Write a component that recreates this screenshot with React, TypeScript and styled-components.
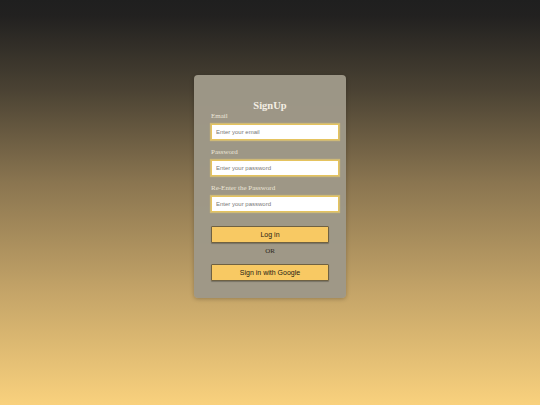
import React from "react";
import styled, { createGlobalStyle } from "styled-components";

const Global = createGlobalStyle`
  html, body { margin: 0; padding: 0; }
  body {
    min-height: 100vh;
    background: linear-gradient(180deg, #1f1f1f 0%, #222120 4%, #4a4233 22%, #8a7550 45%, #c4a468 72%, #f9d17d 100%);
    font-family: "Liberation Serif", serif;
  }
`;

const Page = styled.div`
  min-height: 100vh;
  box-sizing: border-box;
  display: flex;
  justify-content: center;
  align-items: flex-start;
  padding-top: 75px;
`;

const Card = styled.form`
  width: 152px;
  box-sizing: border-box;
  padding: 25px 17px 17px;
  background: rgba(158, 152, 136, 0.98);
  border-radius: 4px;
  box-shadow: 0 1px 4px rgba(0, 0, 0, 0.25);
  display: flex;
  flex-direction: column;
`;

const Title = styled.h2`
  margin: 0;
  text-align: center;
  font-family: "Liberation Serif", serif;
  font-weight: bold;
  font-size: 10.5px;
  line-height: 12px;
  color: #f3eee4;
`;

const Label = styled.label<{ $first?: boolean }>`
  display: block;
  margin-top: ${(p) => (p.$first ? "0" : "8px")};
  font-family: "Liberation Serif", serif;
  font-size: 7px;
  line-height: 9px;
  color: #ece6d8;
`;

const Input = styled.input`
  display: block;
  margin-top: 3px;
  width: 100%;
  height: 14px;
  box-sizing: content-box;
  padding: 0 4px;
  border: 1px solid #e5c35e;
  box-shadow: 0 0 1px 1px rgba(240, 210, 110, 0.6);
  background: #ffffff;
  font-family: "Liberation Sans", sans-serif;
  font-size: 6px;
  color: #333;
  outline: none;
  &::placeholder { color: #777; }
`;

const Button = styled.button<{ $top: number }>`
  display: block;
  margin-top: ${(p) => p.$top}px;
  width: 100%;
  height: 17px;
  box-sizing: border-box;
  background: #f8c963;
  border: 1px solid #6f6142;
  border-radius: 1px;
  box-shadow: 0 1px 1px rgba(0, 0, 0, 0.25);
  font-family: "Liberation Sans", sans-serif;
  font-size: 7px;
  color: #1d1a14;
  padding: 0;
  cursor: pointer;
`;

const Or = styled.div`
  margin-top: 4px;
  text-align: center;
  font-family: "Liberation Serif", serif;
  font-size: 7px;
  line-height: 9px;
  color: #2e2a22;
`;

export default function App() {
  return (
    <>
      <Global />
      <Page>
        <Card onSubmit={(e) => e.preventDefault()}>
          <Title>SignUp</Title>
          <Label $first>Email</Label>
          <Input type="email" placeholder="Enter your email" />
          <Label>Password</Label>
          <Input type="password" placeholder="Enter your password" />
          <Label>Re-Enter the Password</Label>
          <Input type="password" placeholder="Enter your password" />
          <Button type="submit" $top={14}>Log in</Button>
          <Or>OR</Or>
          <Button type="button" $top={8}>Sign in with Google</Button>
        </Card>
      </Page>
    </>
  );
}
